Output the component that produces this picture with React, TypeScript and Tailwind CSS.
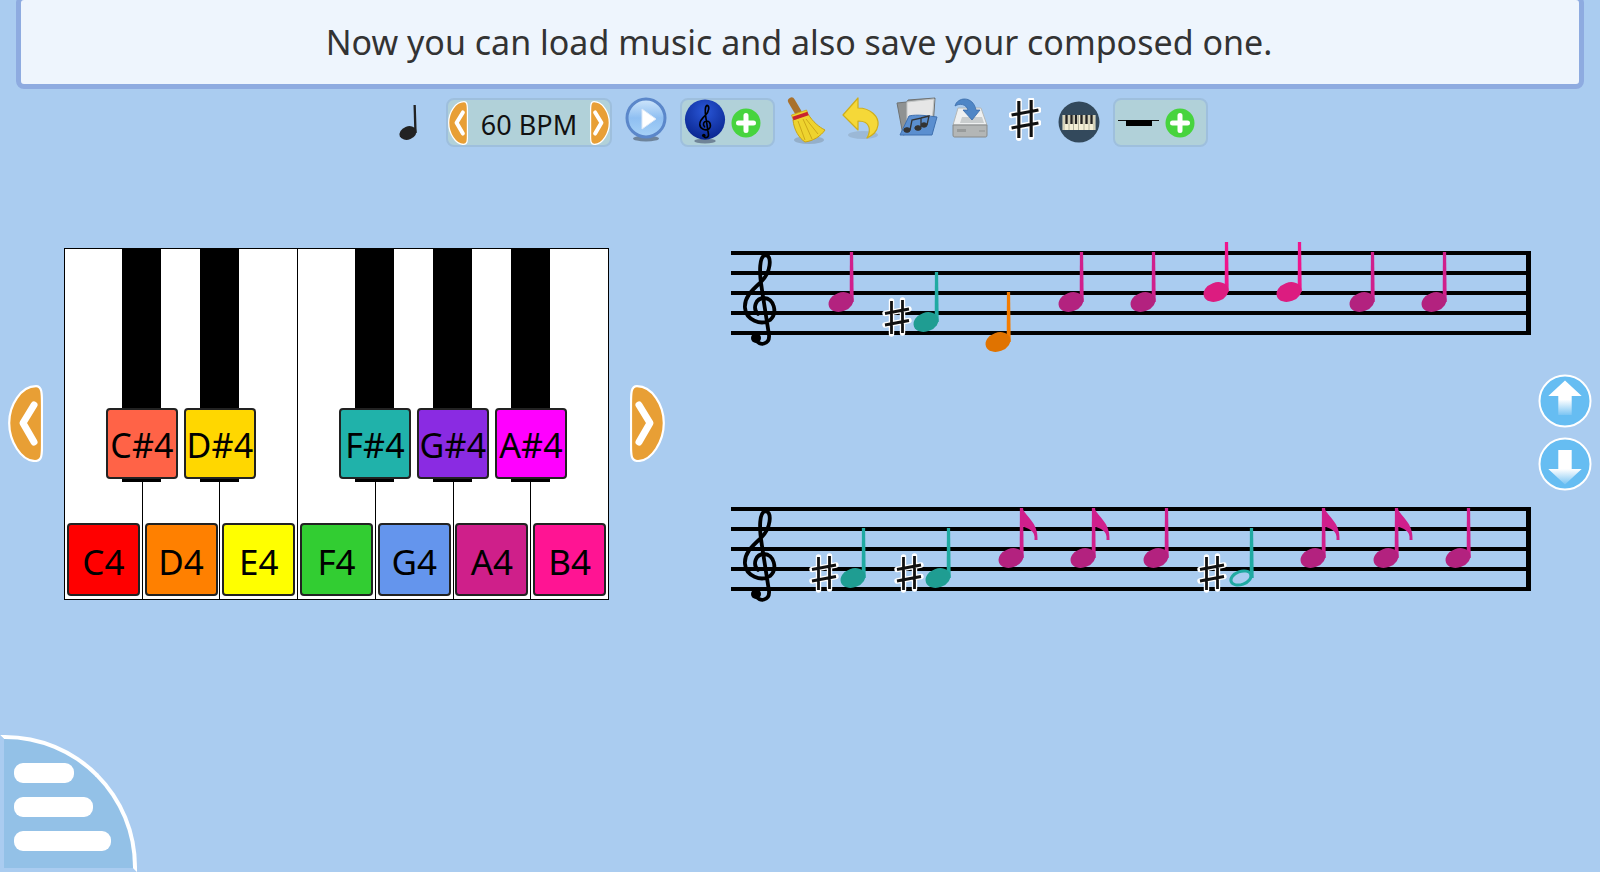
import React from "react";

const font = { fontFamily: '"Noto Sans", sans-serif' };

function Chevron({ dir, className }: { dir: "l" | "r"; className: string }) {
  return (
    <svg viewBox="0 0 35 77" className={className}>
      <g transform={dir === "r" ? "translate(35,0) scale(-1,1)" : undefined}>
        <path d="M28 1.200C34 1.200 34 8 34 20L34 60C34 70 34 76 27 76C13 76 1.200 56 1.200 38C1.200 20 13 1.200 28 1.200Z" fill="#e89f35" stroke="#fff" strokeWidth="2.200" />
        <path d="M26 20L15 38L26 57" fill="none" stroke="#fff" strokeWidth="7" strokeLinecap="round" strokeLinejoin="round" />
      </g>
    </svg>
  );
}

function Clef({ color = "#000", sw = 3.8 }: { color?: string; sw?: number }) {
  return (
    <g>
      <path d="M25 100C28 106 39 105 38 95L31 50C28 32 28 15 35 15C41 17 40 32 30 42C20 51 13 58 14 68C15 80 30 86 39 80C47 73 43 58 33 58C25 58 21 68 27 74" fill="none" stroke={color} strokeWidth={sw} strokeLinecap="round" />
      <circle cx="25" cy="98" r="5" fill={color} />
    </g>
  );
}

function Sharp({ x, y, scale = 1 }: { x: number; y: number; scale?: number }) {
  const d = "M-5.500 -16L-5.500 17M5.500 -17L5.500 16M-12 -3.500L12 -8M-12 8L12 3.500";
  return (
    <g transform={`translate(${x},${y}) scale(${scale})`}>
      <path d={d} stroke="#fff" strokeWidth="5.400" strokeLinecap="round" fill="none" />
      <path d={d} stroke="#111" strokeWidth="2.800" strokeLinecap="butt" fill="none" />
    </g>
  );
}

type N = { x: number; y: number; stem: string; head: string; flag?: boolean; open?: boolean; sharp?: number };

const M = { stem: "#d01f8c", head: "#b3227f" };
const P = { stem: "#f0158c", head: "#dc1c80" };
const T = { stem: "#20aaa2", head: "#1f9d92" };
const O = { stem: "#f47c00", head: "#e07300" };

const staff1: N[] = [
  { x: 841, y: 302, ...M },
  { x: 926, y: 322, ...T, sharp: 897 },
  { x: 998, y: 342, ...O },
  { x: 1071, y: 302, ...M },
  { x: 1143, y: 302, ...M },
  { x: 1216, y: 292, ...P },
  { x: 1289, y: 292, ...P },
  { x: 1362, y: 302, ...M },
  { x: 1434, y: 302, ...M },
];
const staff2: N[] = [
  { x: 853, y: 578, ...T, sharp: 824 },
  { x: 938, y: 578, ...T, sharp: 909 },
  { x: 1011, y: 558, ...M, flag: true },
  { x: 1083, y: 558, ...M, flag: true },
  { x: 1156, y: 558, ...M },
  { x: 1241, y: 578, ...T, open: true, sharp: 1212 },
  { x: 1313, y: 558, ...M, flag: true },
  { x: 1386, y: 558, ...M, flag: true },
  { x: 1458, y: 558, ...M },
];

function Note({ n, top }: { n: N; top: number }) {
  const x = n.x - 731;
  const y = n.y - top;
  const sx = x + 10.500;
  const st = y - 50;
  return (
    <g>
      {n.sharp !== undefined && <Sharp x={n.sharp - 731} y={y - 5} />}
      {n.flag && (
        <path d={`M${sx - 1.500} ${st}L${sx + 1} ${st}C${sx + 4} ${st + 9} ${sx + 17} ${st + 14} ${sx + 16} ${st + 32}L${sx + 13} ${st + 32}C${sx + 14} ${st + 22} ${sx + 7} ${st + 21} ${sx} ${st + 18}Z`} fill={n.stem} />
      )}
      <path d={`M${sx - 1.600} ${st}L${sx + 1.600} ${st}L${sx + 2.200} ${y}L${sx - 1.800} ${y}Z`} fill={n.stem} />
      {n.open ? (
        <ellipse cx={x} cy={y} rx="10.500" ry="6.500" transform={`rotate(-20 ${x} ${y})`} fill="none" stroke={n.stem} strokeWidth="3" />
      ) : (
        <ellipse cx={x} cy={y} rx="12.800" ry="9.400" transform={`rotate(-20 ${x} ${y})`} fill={n.head} />
      )}
    </g>
  );
}

function Staff({ notes, top, className }: { notes: N[]; top: number; className?: string }) {
  const lines = [13, 33, 53, 73, 93];
  return (
    <svg viewBox="0 0 800 120" className={`block w-[800px] h-[120px] ${className ?? ""}`}>
      {lines.map((y) => (
        <rect key={y} x="0" y={y - 2} width="800" height="4" fill="#000" />
      ))}
      <rect x="795" y="11" width="5" height="84" fill="#000" />
      <Clef />
      {notes.map((n, i) => (
        <Note key={i} n={n} top={top} />
      ))}
    </svg>
  );
}

const whites = [
  { t: "C4", c: "bg-[#ff0000]" },
  { t: "D4", c: "bg-[#ff8000]" },
  { t: "E4", c: "bg-[#ffff00]" },
  { t: "F4", c: "bg-[#32cd32]" },
  { t: "G4", c: "bg-[#6495ed]" },
  { t: "A4", c: "bg-[#cf1f8a]" },
  { t: "B4", c: "bg-[#ff1493]" },
];
const blacks = [
  { t: "C#4", c: "bg-[#ff6347]", p: "left-[57px]" },
  { t: "D#4", c: "bg-[#ffd700]", p: "left-[135px]" },
  { t: "F#4", c: "bg-[#20b2aa]", p: "left-[290px]" },
  { t: "G#4", c: "bg-[#8a2be2]", p: "left-[368px]" },
  { t: "A#4", c: "bg-[#ff00ff]", p: "left-[446px]" },
];

function Piano() {
  return (
    <div className="relative flex w-[545px] h-[352px] border border-black bg-white shrink-0" style={font}>
      {whites.map((w, i) => (
        <div key={w.t} className={`flex-1 flex items-end justify-center pb-[3px] ${i < 6 ? "border-r border-black" : ""}`}>
          <div className={`w-[73px] h-[73px] shrink-0 rounded-[4px] border-2 border-[#222] flex items-center justify-center pt-[5px] text-[35px] text-black ${w.c}`}>{w.t}</div>
        </div>
      ))}
      {blacks.map((b) => (
        <div key={b.t} className={`absolute top-0 w-[39px] h-[233px] bg-black ${b.p}`}>
          <div className={`absolute top-[159px] -left-[16px] w-[72px] h-[71px] rounded-[4px] border-2 border-[#222] flex items-center justify-center pt-[2px] text-[34px] leading-none tracking-[0.2px] text-black ${b.c}`}>{b.t}</div>
        </div>
      ))}
    </div>
  );
}

function Plus() {
  return (
    <svg viewBox="0 0 30 30" className="w-[30px] h-[30px] shrink-0">
      <circle cx="15" cy="15" r="14.500" fill="#47d43e" />
      <path d="M15 7.500V22.500M7.500 15H22.500" stroke="#fff" strokeWidth="5" strokeLinecap="round" />
    </svg>
  );
}

function Group({ className, children }: { className: string; children: React.ReactNode }) {
  return <div className={`h-[49px] shrink-0 rounded-[8px] border-2 border-[#9ebfdd] bg-[#b1d1d9] flex items-center ${className}`}>{children}</div>;
}

function Toolbar() {
  return (
    <div className="mt-[9px] h-[49px] flex items-start pl-[396px]">
      <svg viewBox="0 0 28 49" className="w-[28px] h-[49px] shrink-0">
        <ellipse cx="12" cy="35" rx="8.800" ry="6.500" transform="rotate(-22 12 35)" fill="#222" />
        <path d="M17.500 7L19.800 7L20.700 35L18.300 35Z" fill="#222" />
      </svg>
      <Group className="ml-[22px] w-[166px] justify-between">
        <Chevron dir="l" className="w-[20px] h-[44px]" />
        <span className="text-[27px] leading-none text-[#111] pt-[4px]" style={font}>60 BPM</span>
        <Chevron dir="r" className="w-[20px] h-[44px]" />
      </Group>
      <svg viewBox="0 0 42 46" className="ml-[13px] w-[42px] h-[46px] shrink-0 -mt-[1px]">
        <defs>
          <linearGradient id="pb" x1="0" y1="0" x2="0" y2="1">
            <stop offset="0" stopColor="#cfe6fb" />
            <stop offset="0.5" stopColor="#8fbff2" />
            <stop offset="1" stopColor="#a7d2f7" />
          </linearGradient>
        </defs>
        <ellipse cx="21" cy="41.500" rx="13" ry="3" fill="#64778c" opacity="0.85" />
        <circle cx="21" cy="21" r="19" fill="url(#pb)" stroke="#5b87ca" strokeWidth="3" />
        <path d="M17 12L31 22L17 32Z" fill="#fff" stroke="#dce9f8" strokeWidth="1" />
      </svg>
      <Group className="ml-[13px] w-[95px] pl-[2px] gap-[5px]">
        <svg viewBox="0 0 42 48" className="w-[42px] h-[47px] shrink-0">
          <defs>
            <radialGradient id="tb" cx="0.5" cy="0.3" r="0.8">
              <stop offset="0" stopColor="#2a57d8" />
              <stop offset="1" stopColor="#051f86" />
            </radialGradient>
          </defs>
          <ellipse cx="21" cy="43" rx="11" ry="2.500" fill="#64778c" opacity="0.85" />
          <circle cx="21" cy="21" r="20.500" fill="url(#tb)" />
          <g transform="translate(10.500,1) scale(0.37)">
            <Clef sw={4.5} />
          </g>
        </svg>
        <Plus />
      </Group>
      <svg viewBox="0 0 44 52" className="ml-[10px] w-[44px] h-[52px] shrink-0 -mt-[2px]">
        <ellipse cx="24" cy="44" rx="15" ry="4" fill="#7b8b9b" opacity="0.45" />
        <path d="M6.500 5L13 16" stroke="#a9712d" strokeWidth="7" strokeLinecap="round" />
        <path d="M8 24L23 18C28 26 34 31 40 34C36 40 28 45 20 46C14 42 9 34 8 24Z" fill="#eed32e" stroke="#c9a316" strokeWidth="1" />
        <path d="M13 25L20 44M18 23L27 43M21 23L33 38" stroke="#c9a316" strokeWidth="0.900" />
        <path d="M6.500 19L21.500 14L23 18L8.300 24Z" fill="#eed32e" stroke="#c9a316" strokeWidth="0.800" />
        <path d="M8 22.500L23 17.500" stroke="#c8222f" strokeWidth="3.600" />
      </svg>
      <svg viewBox="0 0 40 46" className="ml-[12px] w-[40px] h-[46px] shrink-0 -mt-[1px]">
        <ellipse cx="22" cy="38" rx="15" ry="4" fill="#7b8b9b" opacity="0.3" />
        <path d="M2 18L17 1L17 11C30 11 38 20 37 28C36 35 32 38 26 41C30 34 30 24 17 24L17 33Z" fill="#f5d838" stroke="#cfae1b" strokeWidth="1.200" strokeLinejoin="round" />
      </svg>
      <svg viewBox="0 0 44 42" className="ml-[14px] w-[44px] h-[42px] shrink-0 -mt-[1px]">
        <path d="M2 6L12 5L13 3L40 1L38 30L8 38Z" fill="#8f9292" stroke="#6f7272" />
        <path d="M12 5L39 2L37 26L12 26Z" fill="#e6e6e6" stroke="#c4c7c7" />
        <path d="M14 19C22 17 34 19 42 20L37 38L5 38Z" fill="#5b8fd0" stroke="#3e6fae" />
        <g fill="#333" stroke="#333">
          <ellipse cx="12" cy="33" rx="3.200" ry="2.300" />
          <ellipse cx="23" cy="31" rx="3.200" ry="2.300" />
          <ellipse cx="29" cy="28" rx="3" ry="2.200" />
          <path d="M15 33L17 23L26 21L26 30M32 28L34 19L26 21" fill="none" strokeWidth="1.300" />
        </g>
      </svg>
      <svg viewBox="0 0 40 42" className="ml-[12px] w-[40px] h-[42px] shrink-0 -mt-[1px]">
        <path d="M7 11L30 11L36 28L2 28Z" fill="#eef0f1" stroke="#b4b8b8" />
        <path d="M9 26L33 26L31 20L11 20Z" fill="#c9cdce" />
        <path d="M2 28L36 28L36 38C36 40 35 40 34 40L4 40C3 40 2 40 2 38Z" fill="#b3b6b6" stroke="#878a8a" />
        <rect x="6" y="32" width="9" height="3" fill="#989b9b" />
        <path d="M29 33V35M31 33V35M33 33V35" stroke="#8f9292" />
        <path d="M4 9C6 0 22 -2 25 13L29 13L21 23L12 13L17 13C15 7 9 6 4 9Z" fill="#4f86c6" stroke="#3a6ba8" strokeWidth="0.800" strokeLinejoin="round" />
      </svg>
      <svg viewBox="0 0 32 44" className="ml-[18px] w-[32px] h-[44px] shrink-0">
        <Sharp x={16} y={21} scale={1.120} />
      </svg>
      <svg viewBox="0 0 42 42" className="ml-[17px] w-[42px] h-[42px] shrink-0 mt-[3px]">
        <circle cx="21" cy="21" r="20.500" fill="#33495c" />
        <rect x="4.500" y="14" width="33" height="15" fill="#f4efd6" />
        <path d="M6 14V29M11 14V29M15.500 14V29M20.500 14V29M26 14V29M31 14V29M36 14V29" stroke="#8a8a7a" strokeWidth="0.600" />
        <path d="M8.500 14V23M13.500 14V23M18 14V23M23.500 14V23M28.500 14V23M33.500 14V23" stroke="#222" strokeWidth="2.400" />
      </svg>
      <Group className="ml-[13px] w-[95px] pl-[3px] gap-[2px]">
        <svg viewBox="0 0 45 20" className="w-[45px] h-[20px] shrink-0">
          <path d="M0 7.500H41" stroke="#111" strokeWidth="1" />
          <rect x="8" y="7" width="26" height="6" fill="#000" />
        </svg>
        <Plus />
      </Group>
    </div>
  );
}

function Side({ up }: { up: boolean }) {
  const gid = up ? "su" : "sd";
  return (
    <svg viewBox="0 0 54 54" className="w-[54px] h-[54px] block">
      <defs>
        <linearGradient id={gid} x1="0" y1={up ? "0" : "1"} x2="0" y2={up ? "1" : "0"}>
          <stop offset="0" stopColor="#fff" />
          <stop offset="0.55" stopColor="#fff" />
          <stop offset="1" stopColor="#7cc5f3" />
        </linearGradient>
      </defs>
      <circle cx="27" cy="27" r="25.500" fill="#66bdf2" stroke="#fff" strokeWidth="2" />
      <g transform={up ? undefined : "rotate(180 27 27)"}>
        <path d="M27 6.500L43.700 22H33.700V41H20.300V22H10.300Z" fill={`url(#${gid})`} />
      </g>
    </svg>
  );
}

export default function App() {
  return (
    <div className="relative w-full h-[872px] overflow-hidden bg-[#aaccf0]">
      <div className="-mt-[5px] mx-[16px] h-[94px] rounded-[8px] border-[5px] border-[#8eabe0] bg-[#eef5fd] flex items-center justify-center pr-[2px] text-[34px] text-[#333]" style={font}>
        Now you can load music and also save your composed one.
      </div>
      <Toolbar />
      <div className="mt-[101px] flex items-start pl-[8px]">
        <Chevron dir="l" className="mt-[137px] w-[35px] h-[77px] shrink-0" />
        <div className="ml-[21px]">
          <Piano />
        </div>
        <Chevron dir="r" className="ml-[21px] mt-[137px] w-[35px] h-[77px] shrink-0" />
        <div className="ml-[66px] -mt-[8px] shrink-0">
          <Staff notes={staff1} top={240} />
          <Staff notes={staff2} top={496} className="mt-[136px]" />
        </div>
        <div className="ml-[7px] mt-[126px] flex flex-col gap-[9px]">
          <Side up />
          <Side up={false} />
        </div>
      </div>
      <div className="absolute left-0 bottom-0 w-[137px] h-[137px] rounded-tr-[132px] border-t-4 border-r-4 border-t-white border-r-white border-l-4 border-b-4 border-l-[#aaccf0] border-b-[#aaccf0] bg-[#93c1e7] pl-[10px] pt-[24px] flex flex-col items-start gap-[14px]">
        <div className="w-[60px] h-[20px] rounded-[9px] bg-white" />
        <div className="w-[79px] h-[20px] rounded-[9px] bg-white" />
        <div className="w-[97px] h-[20px] rounded-[9px] bg-white" />
      </div>
    </div>
  );
}
